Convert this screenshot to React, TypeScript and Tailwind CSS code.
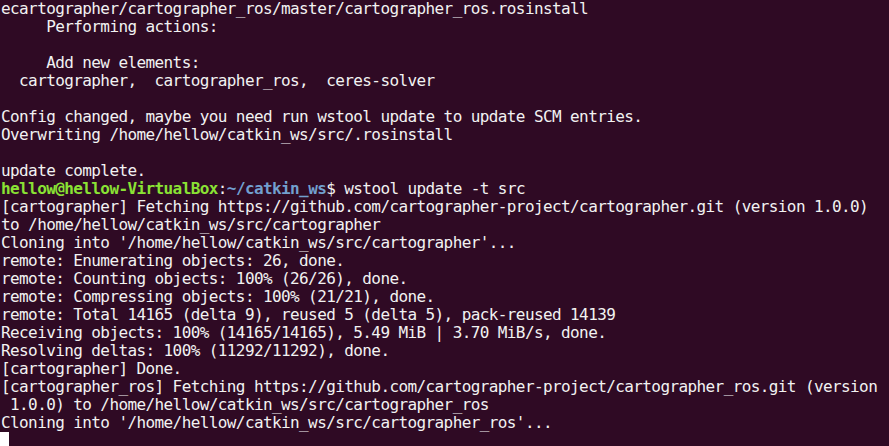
const lines: string[] = [
  "ecartographer/cartographer_ros/master/cartographer_ros.rosinstall",
  "     Performing actions:",
  "",
  "     Add new elements:",
  "  cartographer,  cartographer_ros,  ceres-solver",
  "",
  "Config changed, maybe you need run wstool update to update SCM entries.",
  "Overwriting /home/hellow/catkin_ws/src/.rosinstall",
  "",
  "update complete.",
];

const output: string[] = [
  "[cartographer] Fetching https://github.com/cartographer-project/cartographer.git (version 1.0.0)",
  "to /home/hellow/catkin_ws/src/cartographer",
  "Cloning into '/home/hellow/catkin_ws/src/cartographer'...",
  "remote: Enumerating objects: 26, done.",
  "remote: Counting objects: 100% (26/26), done.",
  "remote: Compressing objects: 100% (21/21), done.",
  "remote: Total 14165 (delta 9), reused 5 (delta 5), pack-reused 14139",
  "Receiving objects: 100% (14165/14165), 5.49 MiB | 3.70 MiB/s, done.",
  "Resolving deltas: 100% (11292/11292), done.",
  "[cartographer] Done.",
  "[cartographer_ros] Fetching https://github.com/cartographer-project/cartographer_ros.git (version",
  " 1.0.0) to /home/hellow/catkin_ws/src/cartographer_ros",
  "Cloning into '/home/hellow/catkin_ws/src/cartographer_ros'...",
];

const Line = ({ text }: { text: string }) => (
  <div className="h-[18px] whitespace-pre">{text}</div>
);

export default function App() {
  return (
    <div
      className="w-[889px] h-[446px] overflow-hidden bg-[#2f0a24] text-[#f2f2f2] text-[16px] leading-[18px] tracking-[-0.6px] pl-[1px]"
      style={{ fontFamily: '"DejaVu Sans Mono", "Liberation Mono", monospace' }}
    >
      {lines.map((l, i) => (
        <Line key={i} text={l} />
      ))}
      <div className="h-[18px] whitespace-pre">
        <span className="font-bold text-[#8ae234]">hellow@hellow-VirtualBox</span>
        <span>:</span>
        <span className="font-bold text-[#729fcf]">~/catkin_ws</span>
        <span>$ wstool update -t src</span>
      </div>
      {output.map((l, i) => (
        <Line key={i} text={l} />
      ))}
      <div className="h-[18px]">
        <div className="w-[9px] h-[16px] -ml-[1px] bg-white" />
      </div>
    </div>
  );
}
